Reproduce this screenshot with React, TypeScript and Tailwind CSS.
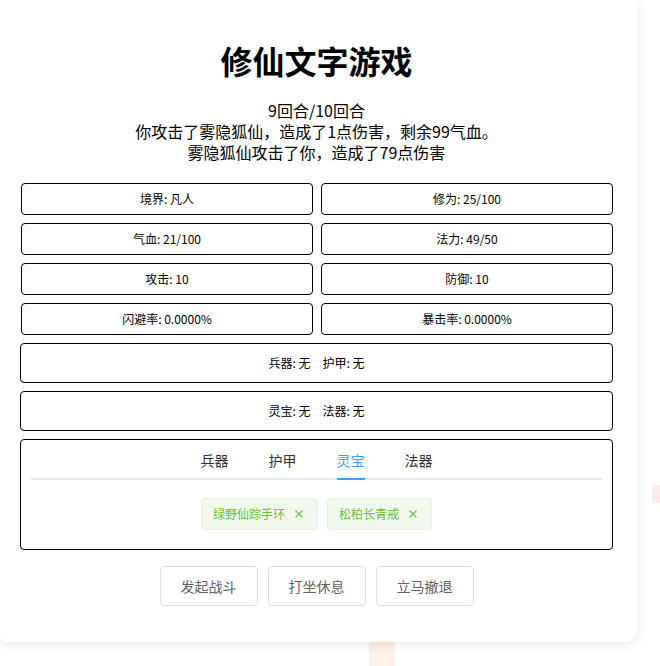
import { useState } from 'react';

const stats = [
  ['境界: 凡人', '修为: 25/100'],
  ['气血: 21/100', '法力: 49/50'],
  ['攻击: 10', '防御: 10'],
  ['闪避率: 0.0000%', '暴击率: 0.0000%'],
];

const tabs = ['兵器', '护甲', '灵宝', '法器'];

const CloseIcon = () => (
  <svg width="14" height="14" viewBox="0 0 14 14" className="ml-[7px]">
    <path d="M3.5 3.5 L10.5 10.5 M10.5 3.5 L3.5 10.5" stroke="#67c23a" strokeWidth="1.1" fill="none" />
  </svg>
);

const App = () => {
  const [active, setActive] = useState('灵宝');
  const [tags, setTags] = useState(['绿野仙踪手环', '松柏长青戒']);

  return (
    <div
      className="relative w-[660px] h-[666px] overflow-hidden bg-white text-black"
      style={{ fontFamily: '"Noto Sans CJK SC", "Noto Sans", sans-serif' }}
    >
      {/* 背景装饰 */}
      <div className="absolute left-[652px] top-[485px] w-[10px] h-[18px] bg-[#fdeaea]" />
      <div className="absolute left-[369px] top-[636px] w-[26px] h-[30px] bg-[#fdf0e6]" />

      {/* 主卡片 */}
      <div className="relative -ml-[3px] w-[640px] bg-white rounded-b-[12px] shadow-[0_2px_12px_rgba(0,0,0,0.1)] pl-[23px] pr-[24px] pt-[40px] pb-[36px]">
        <h1 className="text-center text-[32px] leading-[40px] font-bold">修仙文字游戏</h1>

        <div className="mt-[20px] text-center text-[16px] leading-[21px]">
          <p>9回合/10回合</p>
          <p>你攻击了雾隐狐仙，造成了1点伤害，剩余99气血。</p>
          <p>雾隐狐仙攻击了你，造成了79点伤害</p>
        </div>

        {/* 属性 */}
        <div className="mt-[20px] grid grid-cols-2 gap-[8px] pl-[1px]">
          {stats.flat().map((s) => (
            <div key={s} className="h-[32px] border border-black rounded-[4px] flex items-center justify-center text-[12px]">
              {s}
            </div>
          ))}
        </div>

        {/* 装备 */}
        <div className="mt-[8px] h-[40px] border border-black rounded-[4px] flex items-center justify-center text-[12px]">
          <span>兵器: 无</span>
          <span className="ml-[12px]">护甲: 无</span>
        </div>
        <div className="mt-[8px] h-[40px] border border-black rounded-[4px] flex items-center justify-center text-[12px]">
          <span>灵宝: 无</span>
          <span className="ml-[12px]">法器: 无</span>
        </div>

        {/* 背包标签页 */}
        <div className="mt-[8px] border border-black rounded-[4px] px-[10px] pb-[19px]">
          <div className="relative flex justify-center h-[40px]">
            <div className="absolute left-0 right-0 bottom-0 h-[2px] bg-[#e4e7ed]" />
            {tabs.map((t) => (
              <div
                key={t}
                onClick={() => setActive(t)}
                className={`relative px-[20px] h-[40px] leading-[40px] text-[14px] cursor-pointer ${active === t ? 'text-[#409eff]' : 'text-[#303133]'}`}
              >
                {t}
                {active === t && <div className="absolute left-[20px] right-[20px] bottom-0 h-[2px] bg-[#409eff]" />}
              </div>
            ))}
          </div>
          <div className="mt-[18px] flex justify-center gap-[9px]">
            {tags.map((t) => (
              <div
                key={t}
                className="h-[32px] px-[11px] flex items-center bg-[#f0f9eb] border border-[#e1f3d8] rounded-[4px] text-[12px] text-[#67c23a]"
              >
                {t}
                <button onClick={() => setTags(tags.filter((x) => x !== t))}>
                  <CloseIcon />
                </button>
              </div>
            ))}
          </div>
        </div>

        {/* 操作按钮 */}
        <div className="mt-[16px] flex justify-center gap-[10px]">
          {['发起战斗', '打坐休息', '立马撤退'].map((b) => (
            <button
              key={b}
              className="w-[98px] h-[40px] border border-[#dcdfe6] rounded-[4px] bg-white text-[14px] text-[#606266]"
            >
              {b}
            </button>
          ))}
        </div>
      </div>
    </div>
  );
};

export default App;
